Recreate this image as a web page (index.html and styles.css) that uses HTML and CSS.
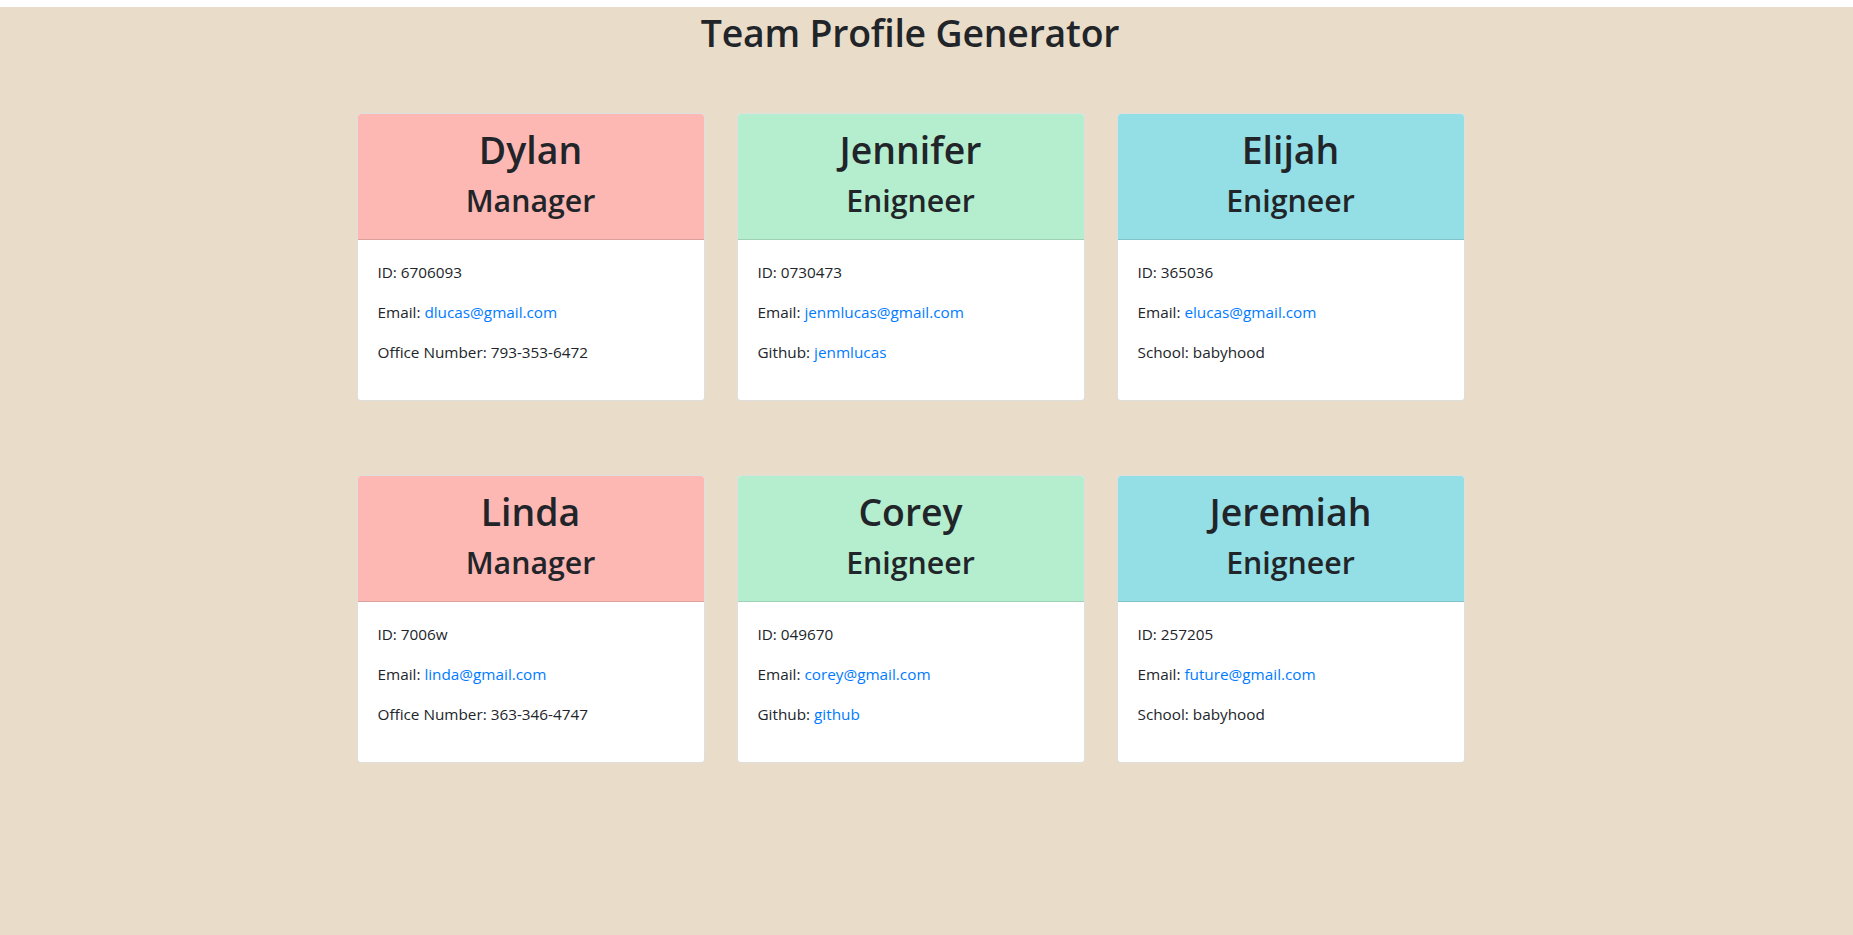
FILE: index.html
```html
<!DOCTYPE html>
<html lang="en">
<head>
<meta charset="UTF-8">
<title>Team Profile Generator</title>
<link rel="stylesheet" href="styles.css">
</head>
<body>
<div class="topbar"></div>
<main class="page">
  <h1 class="title">Team Profile Generator</h1>
  <div class="container">
    <div class="grid">
      <div class="card">
        <div class="card-header manager">
          <h2 class="name">Dylan</h2>
          <h3 class="role">Manager</h3>
        </div>
        <div class="card-body">
          <p>ID: 6706093</p>
          <p>Email: <a href="#">dlucas@gmail.com</a></p>
          <p>Office Number: 793-353-6472</p>
        </div>
      </div>
      <div class="card">
        <div class="card-header engineer">
          <h2 class="name">Jennifer</h2>
          <h3 class="role">Enigneer</h3>
        </div>
        <div class="card-body">
          <p>ID: 0730473</p>
          <p>Email: <a href="#">jenmlucas@gmail.com</a></p>
          <p>Github: <a href="#">jenmlucas</a></p>
        </div>
      </div>
      <div class="card">
        <div class="card-header intern">
          <h2 class="name">Elijah</h2>
          <h3 class="role">Enigneer</h3>
        </div>
        <div class="card-body">
          <p>ID: 365036</p>
          <p>Email: <a href="#">elucas@gmail.com</a></p>
          <p>School: babyhood</p>
        </div>
      </div>
      <div class="card">
        <div class="card-header manager">
          <h2 class="name">Linda</h2>
          <h3 class="role">Manager</h3>
        </div>
        <div class="card-body">
          <p>ID: 7006w</p>
          <p>Email: <a href="#">linda@gmail.com</a></p>
          <p>Office Number: 363-346-4747</p>
        </div>
      </div>
      <div class="card">
        <div class="card-header engineer">
          <h2 class="name">Corey</h2>
          <h3 class="role">Enigneer</h3>
        </div>
        <div class="card-body">
          <p>ID: 049670</p>
          <p>Email: <a href="#">corey@gmail.com</a></p>
          <p>Github: <a href="#">github</a></p>
        </div>
      </div>
      <div class="card">
        <div class="card-header intern">
          <h2 class="name">Jeremiah</h2>
          <h3 class="role">Enigneer</h3>
        </div>
        <div class="card-body">
          <p>ID: 257205</p>
          <p>Email: <a href="#">future@gmail.com</a></p>
          <p>School: babyhood</p>
        </div>
      </div>
    </div>
  </div>
</main>
</body>
</html>
```

FILE: styles.css
```css
* { box-sizing: border-box; }

html, body {
  margin: 0;
  padding: 0;
  background: #ffffff;
}

body {
  font-family: "Open Sans", "Noto Sans", "Liberation Sans", sans-serif;
  font-size: 16px;
  line-height: 1.5;
  color: #212529;
}

.topbar {
  height: 7px;
  background: #ffffff;
}

.page {
  background: #e9dcc8;
  min-height: 928px;
  padding-top: 2px;
}

.title {
  margin: 0;
  padding-right: 33px;
  font-size: 37.4px;
  line-height: 48px;
  font-weight: 600;
  text-align: center;
  letter-spacing: -0.2px;
}

.container {
  width: 1140px;
  margin: 56px auto 0;
}

.grid {
  display: grid;
  grid-template-columns: repeat(3, 348px);
  column-gap: 32px;
  row-gap: 74px;
}

.card {
  background: #ffffff;
  border: 1px solid rgba(0, 0, 0, 0.125);
  border-radius: 4px;
  overflow: hidden;
}

.card-header {
  padding: 12px 20px 11px;
  text-align: center;
  border-bottom: 1px solid rgba(0, 0, 0, 0.125);
}

.manager { background: #fdb8b4; }
.engineer { background: #b4eece; }
.intern { background: #94dfe6; }

.name {
  margin: 0 0 8px;
  font-size: 37.4px;
  line-height: 48px;
  font-weight: 600;
}

.role {
  margin: 0 0 8px;
  font-size: 30.3px;
  line-height: 38px;
  font-weight: 600;
}

.card-body {
  padding: 20px 20px 20px;
}

.card-body p {
  margin: 0 0 16px;
  font-size: 15.3px;
  line-height: 24px;
}

.card-body a {
  color: #007bff;
  text-decoration: none;
}
```
